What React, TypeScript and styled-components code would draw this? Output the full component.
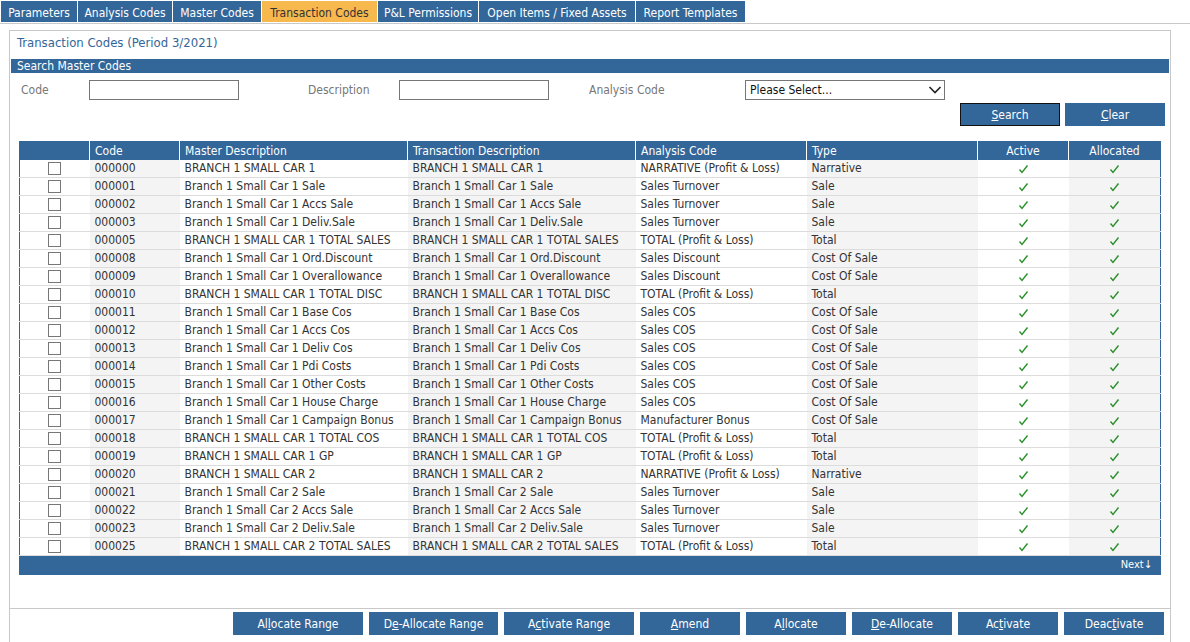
import React from 'react';
import styled, { createGlobalStyle } from 'styled-components';

const BLUE = '#336699';

const GlobalStyle = createGlobalStyle`
  html, body {
    margin: 0;
    padding: 0;
    background: #fff;
    font-family: "DejaVu Sans Condensed", "DejaVu Sans", Tahoma, sans-serif;
    font-size: 12px;
    color: #333;
  }
`;

const tabs = [
  { label: 'Parameters', width: 76 },
  { label: 'Analysis Codes', width: 94 },
  { label: 'Master Codes', width: 88 },
  { label: 'Transaction Codes', width: 115, active: true },
  { label: 'P&L Permissions', width: 100 },
  { label: 'Open Items / Fixed Assets', width: 156 },
  { label: 'Report Templates', width: 109 },
];

type Row = [string, string, string, string];

const rows: Row[] = [
  ['000000', 'BRANCH 1 SMALL CAR 1', 'NARRATIVE (Profit & Loss)', 'Narrative'],
  ['000001', 'Branch 1 Small Car 1 Sale', 'Sales Turnover', 'Sale'],
  ['000002', 'Branch 1 Small Car 1 Accs Sale', 'Sales Turnover', 'Sale'],
  ['000003', 'Branch 1 Small Car 1 Deliv.Sale', 'Sales Turnover', 'Sale'],
  ['000005', 'BRANCH 1 SMALL CAR 1 TOTAL SALES', 'TOTAL (Profit & Loss)', 'Total'],
  ['000008', 'Branch 1 Small Car 1 Ord.Discount', 'Sales Discount', 'Cost Of Sale'],
  ['000009', 'Branch 1 Small Car 1 Overallowance', 'Sales Discount', 'Cost Of Sale'],
  ['000010', 'BRANCH 1 SMALL CAR 1 TOTAL DISC', 'TOTAL (Profit & Loss)', 'Total'],
  ['000011', 'Branch 1 Small Car 1 Base Cos', 'Sales COS', 'Cost Of Sale'],
  ['000012', 'Branch 1 Small Car 1 Accs Cos', 'Sales COS', 'Cost Of Sale'],
  ['000013', 'Branch 1 Small Car 1 Deliv Cos', 'Sales COS', 'Cost Of Sale'],
  ['000014', 'Branch 1 Small Car 1 Pdi Costs', 'Sales COS', 'Cost Of Sale'],
  ['000015', 'Branch 1 Small Car 1 Other Costs', 'Sales COS', 'Cost Of Sale'],
  ['000016', 'Branch 1 Small Car 1 House Charge', 'Sales COS', 'Cost Of Sale'],
  ['000017', 'Branch 1 Small Car 1 Campaign Bonus', 'Manufacturer Bonus', 'Cost Of Sale'],
  ['000018', 'BRANCH 1 SMALL CAR 1 TOTAL COS', 'TOTAL (Profit & Loss)', 'Total'],
  ['000019', 'BRANCH 1 SMALL CAR 1 GP', 'TOTAL (Profit & Loss)', 'Total'],
  ['000020', 'BRANCH 1 SMALL CAR 2', 'NARRATIVE (Profit & Loss)', 'Narrative'],
  ['000021', 'Branch 1 Small Car 2 Sale', 'Sales Turnover', 'Sale'],
  ['000022', 'Branch 1 Small Car 2 Accs Sale', 'Sales Turnover', 'Sale'],
  ['000023', 'Branch 1 Small Car 2 Deliv.Sale', 'Sales Turnover', 'Sale'],
  ['000025', 'BRANCH 1 SMALL CAR 2 TOTAL SALES', 'TOTAL (Profit & Loss)', 'Total'],
];

const columns = [
  { label: '', width: 70 },
  { label: 'Code', width: 90 },
  { label: 'Master Description', width: 228 },
  { label: 'Transaction Description', width: 228 },
  { label: 'Analysis Code', width: 171 },
  { label: 'Type', width: 171 },
  { label: 'Active', width: 91, center: true },
  { label: 'Allocated', width: 92, center: true },
];

// label split into [before, underlined key, after]
const actions: { parts: [string, string, string]; width: number }[] = [
  { parts: ['Al', 'l', 'ocate Range'], width: 130 },
  { parts: ['D', 'e', '-Allocate Range'], width: 129 },
  { parts: ['A', 'c', 'tivate Range'], width: 130 },
  { parts: ['', 'A', 'mend'], width: 100 },
  { parts: ['A', 'l', 'locate'], width: 100 },
  { parts: ['', 'D', 'e-Allocate'], width: 100 },
  { parts: ['Ac', 't', 'ivate'], width: 100 },
  { parts: ['Deac', 't', 'ivate'], width: 100 },
];

const Check = () => (
  <svg width="11" height="10" viewBox="0 0 11 10">
    <path d="M1.5 5.5 L4 8.5 L9.5 1.5" fill="none" stroke="#2a8f2a" strokeWidth="1.4" />
  </svg>
);

const Chevron = () => (
  <svg width="14" height="10" viewBox="0 0 14 10">
    <path d="M1.5 2 L7 7.5 L12.5 2" fill="none" stroke="#222" strokeWidth="1.6" />
  </svg>
);

const App: React.FC = () => (
  <Root>
    <GlobalStyle />
    <TabBar>
      {tabs.map((t) => (
        <Tab key={t.label} $active={!!t.active} style={{ width: t.width }}>
          {t.label}
        </Tab>
      ))}
    </TabBar>

    <Panel>
      <Title>Transaction Codes (Period 3/2021)</Title>
      <SectionBar>Search Master Codes</SectionBar>

      <SearchRow>
        <Label $w={68}>Code</Label>
        <TextInput />
        <Label $w={91} $ml={69}>Description</Label>
        <TextInput />
        <Label $w={156} $ml={40}>Analysis Code</Label>
        <Select>
          <span>Please Select...</span>
          <Chevron />
        </Select>
      </SearchRow>

      <SearchButtons>
        <Button $w={100} $focused>
          <u>S</u>earch
        </Button>
        <Button $w={100}>
          <u>C</u>lear
        </Button>
      </SearchButtons>

      <Grid>
        <colgroup>
          {columns.map((c, i) => (
            <col key={i} style={{ width: c.width }} />
          ))}
        </colgroup>
        <thead>
          <tr>
            {columns.map((c, i) => (
              <Th key={i} $center={!!c.center}>
                {c.label}
              </Th>
            ))}
          </tr>
        </thead>
        <tbody>
          {rows.map(([code, desc, analysis, type]) => (
            <tr key={code}>
              <Td $center>
                <Box />
              </Td>
              <Td>{code}</Td>
              <Td>{desc}</Td>
              <Td>{desc}</Td>
              <Td>{analysis}</Td>
              <Td>{type}</Td>
              <Td $center>
                <Check />
              </Td>
              <Td $center>
                <Check />
              </Td>
            </tr>
          ))}
        </tbody>
        <tfoot>
          <tr>
            <Foot colSpan={8}>Next↓</Foot>
          </tr>
        </tfoot>
      </Grid>

      <ActionBar>
        {actions.map((a) => (
          <Button key={a.parts.join('')} $w={a.width}>
            {a.parts[0]}
            <u>{a.parts[1]}</u>
            {a.parts[2]}
          </Button>
        ))}
      </ActionBar>
    </Panel>
  </Root>
);

export default App;

const Root = styled.div`
  width: 1190px;
  height: 642px;
  overflow: hidden;
`;

const TabBar = styled.div`
  display: flex;
  gap: 1px;
  padding: 1px 0 0 1px;
  height: 22px;
  border-bottom: 1px solid #c8c8c8;
`;

const Tab = styled.div<{ $active: boolean }>`
  box-sizing: border-box;
  height: 21px;
  padding-top: 3px;
  background: ${({ $active }) => ($active ? '#f7b84e' : BLUE)};
  color: ${({ $active }) => ($active ? '#333' : '#fff')};
  font-size: 12px;
  line-height: 18px;
  text-align: center;
  white-space: nowrap;
`;

const Panel = styled.div`
  margin: 6px 19px 0 9px;
  border: 1px solid #c8c8c8;
  height: 640px;
  box-sizing: border-box;
`;

const Title = styled.div`
  color: ${BLUE};
  font-size: 13px;
  padding: 4px 0 0 7px;
  height: 24px;
`;

const SectionBar = styled.div`
  background: ${BLUE};
  color: #fff;
  font-size: 12px;
  height: 14px;
  line-height: 14px;
  margin: 0 1px;
  padding-left: 6px;
`;

const SearchRow = styled.div`
  display: flex;
  align-items: center;
  padding: 7px 0 0 11px;
`;

const Label = styled.div<{ $w: number; $ml?: number }>`
  width: ${({ $w }) => $w}px;
  margin-left: ${({ $ml }) => $ml || 0}px;
  color: #777;
  font-size: 12px;
  margin-top: -1px;
`;

const TextInput = styled.div`
  width: 150px;
  height: 20px;
  box-sizing: border-box;
  border: 1px solid #767676;
  background: #fff;
`;

const Select = styled.div`
  width: 200px;
  height: 20px;
  box-sizing: border-box;
  border: 1px solid #767676;
  display: flex;
  align-items: center;
  justify-content: space-between;
  padding: 0 2px 0 4px;
  color: #111;
  font-size: 12px;
  margin-top: -1px;
`;

const SearchButtons = styled.div`
  display: flex;
  justify-content: flex-end;
  gap: 5px;
  padding: 3px 5px 0 0;
`;

const Button = styled.div<{ $w: number; $focused?: boolean }>`
  width: ${({ $w }) => $w}px;
  height: 23px;
  box-sizing: border-box;
  background: ${BLUE};
  border: 1px solid ${({ $focused }) => ($focused ? '#111' : BLUE)};
  color: #fff;
  font-size: 12px;
  display: flex;
  align-items: center;
  justify-content: center;
  white-space: pre;
`;

const Grid = styled.table`
  margin: 15px 0 0 9px;
  border-collapse: collapse;
  table-layout: fixed;
  width: 1141px;
  border: 1px solid ${BLUE};

  tbody td:nth-child(even) {
    background: #f4f4f4;
  }
`;

const Th = styled.th<{ $center: boolean }>`
  background: ${BLUE};
  color: #fff;
  font-weight: normal;
  font-size: 12px;
  height: 18px;
  padding: 0 5px;
  line-height: 18px;
  text-align: ${({ $center }) => ($center ? 'center' : 'left')};
  border-left: 1px solid #fff;

  &:first-child {
    border-left: none;
  }
`;

const Td = styled.td<{ $center?: boolean }>`
  height: 17px;
  padding: 0 5px;
  border-bottom: 1px solid #dcdcdc;
  white-space: nowrap;
  overflow: hidden;
  font-size: 12px;
  line-height: 17px;
  color: #333;
  text-align: ${({ $center }) => ($center ? 'center' : 'left')};
  vertical-align: middle;

  & > * {
    vertical-align: middle;
  }
`;

const Box = styled.span`
  display: inline-block;
  width: 11px;
  height: 11px;
  border: 1px solid #777;
  background: #fff;
  margin-left: -1px;
`;

const Foot = styled.td`
  background: ${BLUE};
  color: #fff;
  height: 18px;
  line-height: 16px;
  padding: 0 8px 0 0;
  text-align: right;
  font-size: 11px;
`;

const ActionBar = styled.div`
  display: flex;
  justify-content: flex-end;
  gap: 6px;
  margin-top: 33px;
  border-top: 1px solid #c8c8c8;
  padding: 3px 6px 0 0;
`;
